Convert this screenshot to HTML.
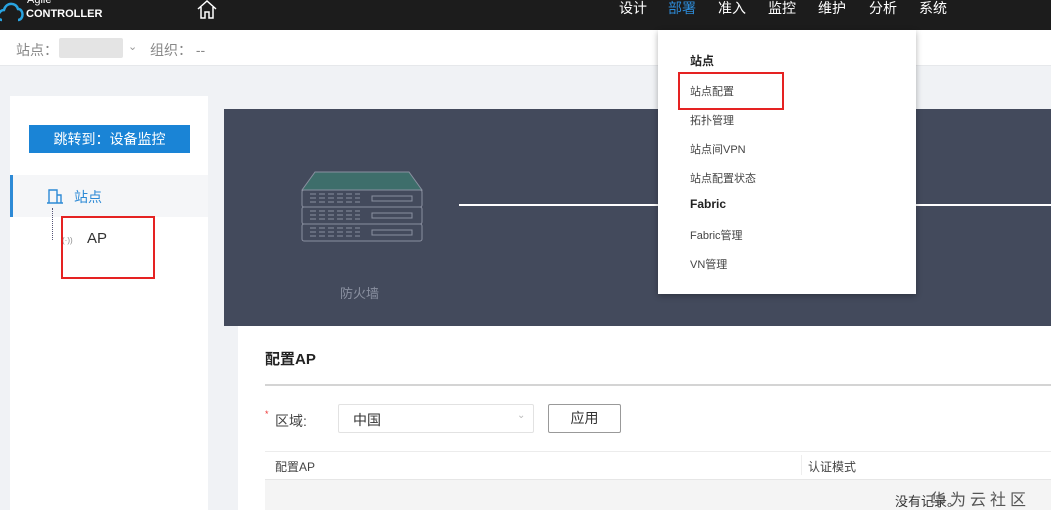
<!DOCTYPE html>
<html><head><meta charset="utf-8"><style>
*{margin:0;padding:0;box-sizing:border-box}
body{width:1051px;height:522px;overflow:hidden;background:#f0f2f5;font-family:"Liberation Sans","Noto Sans CJK SC",sans-serif;position:relative;color:#333}
.a{position:absolute}
.hdr{left:0;top:0;width:1051px;height:30px;background:#1c1c1c}
.nav{top:0;font-size:14px;color:#fff;line-height:16px}
.menu{left:658px;top:30px;width:258px;height:264px;background:#fff;box-shadow:0 2px 6px rgba(0,0,0,.3)}
.mi{position:absolute;left:32px;font-size:11px;color:#444}
</style></head><body>
<div class="a hdr"></div>
<svg class="a" style="left:0;top:0" width="24" height="22"><path d="M2 20 C-4 20 -2 10 4 10 C6 2 16 2 18 9 C24 9 24 20 18 20" fill="none" stroke="#29a3e0" stroke-width="2.5"/></svg>
<div class="a" style="left:27px;top:-6px;font-size:11px;color:#fff">Agile</div>
<div class="a" style="left:26px;top:8px;font-size:11px;font-weight:bold;color:#fff">CONTROLLER</div>
<svg class="a" style="left:196px;top:0" width="22" height="20"><path d="M2 9 L11 1 L20 9 M5 7 V18 H9 V12 H13 V18 H17 V7" fill="none" stroke="#fff" stroke-width="1.5"/></svg>
<div class="a nav" style="left:619px">设计</div>
<div class="a nav" style="left:668px;color:#2d8ad6">部署</div>
<div class="a nav" style="left:718px">准入</div>
<div class="a nav" style="left:768px">监控</div>
<div class="a nav" style="left:818px">维护</div>
<div class="a nav" style="left:869px">分析</div>
<div class="a nav" style="left:919px">系统</div>
<div class="a" style="left:0;top:30px;width:1051px;height:36px;background:#fff;border-bottom:1px solid #e6e8eb"></div>
<div class="a" style="left:16px;top:40px;font-size:14px;color:#888">站点：</div>
<div class="a" style="left:59px;top:38px;width:64px;height:20px;background:#e4e4e4;border-radius:2px"></div>
<div class="a" style="left:128px;top:40px;font-size:11px;color:#999">⌄</div>
<div class="a" style="left:150px;top:40px;font-size:14px;color:#888">组织：&nbsp;--</div>
<div class="a" style="left:10px;top:96px;width:198px;height:414px;background:#fff"></div>
<div class="a" style="left:29px;top:125px;width:161px;height:28px;background:#1a84d6;color:#fff;font-size:14px;text-align:center;line-height:28px">跳转到：设备监控</div>
<div class="a" style="left:10px;top:175px;width:198px;height:42px;background:#f5f6f8;border-left:3px solid #2d8ad6"></div>
<svg class="a" style="left:46px;top:187px" width="18" height="18"><path d="M3 16 V3 H11 V16 M11 8 H15 V16 M1 16 H17" fill="none" stroke="#2d8ad6" stroke-width="1.4"/></svg>
<div class="a" style="left:74px;top:187px;font-size:14px;color:#2d8ad6">站点</div>
<div class="a" style="left:52px;top:208px;height:32px;border-left:1px dotted #557"></div>
<div class="a" style="left:62px;top:236px;font-size:8px;color:#888">(·))</div>
<div class="a" style="left:87px;top:230px;font-size:15px;color:#333">AP</div>
<div class="a" style="left:61px;top:216px;width:94px;height:63px;border:2px solid #e52222"></div>
<div class="a" style="left:224px;top:109px;width:827px;height:217px;background:#434a5c"></div>
<svg class="a" style="left:300px;top:168px" width="124" height="76"><path d="M2 22 L15 4 H109 L122 22 Z" fill="#3e6e6b" stroke="#8a90a0"/><g fill="none" stroke="#8a90a0"><rect x="2" y="22" width="120" height="17" rx="2"/><rect x="2" y="39" width="120" height="17" rx="2"/><rect x="2" y="56" width="120" height="17" rx="2"/><rect x="72" y="28" width="40" height="5"/><rect x="72" y="45" width="40" height="5"/><rect x="72" y="62" width="40" height="5"/><path d="M10 26h50M10 30h50M10 34h50M10 43h50M10 47h50M10 51h50M10 60h50M10 64h50M10 68h50" stroke-dasharray="6 3"/></g></svg>
<div class="a" style="left:340px;top:283px;font-size:13px;color:#8a90a0">防火墙</div>
<div class="a" style="left:459px;top:204px;width:200px;height:2px;background:#fff"></div>
<div class="a" style="left:916px;top:204px;width:135px;height:2px;background:#fff"></div>
<div class="a" style="left:238px;top:326px;width:813px;height:184px;background:#fff"></div>
<div class="a" style="left:265px;top:348px;font-size:15px;font-weight:bold;color:#222">配置AP</div>
<div class="a" style="left:265px;top:384px;width:786px;height:2px;background:#d4d4d4"></div>
<div class="a" style="left:265px;top:409px;font-size:9px;color:#e33">*</div>
<div class="a" style="left:275px;top:411px;font-size:14px;color:#444">区域:</div>
<div class="a" style="left:338px;top:404px;width:196px;height:29px;border:1px solid #e2e2e2;border-radius:2px"></div>
<div class="a" style="left:353px;top:410px;font-size:14px;color:#333">中国</div>
<div class="a" style="left:517px;top:410px;font-size:10px;color:#bbb">⌄</div>
<div class="a" style="left:548px;top:404px;width:73px;height:29px;border:1px solid #999;border-radius:2px;font-size:14px;text-align:center;line-height:27px">应用</div>
<div class="a" style="left:265px;top:451px;width:786px;height:1px;background:#ececec"></div>
<div class="a" style="left:275px;top:458px;font-size:12px;color:#444">配置AP</div>
<div class="a" style="left:801px;top:455px;width:1px;height:20px;background:#eee"></div>
<div class="a" style="left:808px;top:458px;font-size:12px;color:#444">认证模式</div>
<div class="a" style="left:265px;top:479px;width:786px;height:31px;background:#f4f4f4;border-top:1px solid #e6e6e6"></div>
<div class="a" style="left:895px;top:491px;font-size:13px;color:#333">没有记录。</div>
<div class="a" style="left:930px;top:486px;font-size:16px;color:#555;letter-spacing:4px">华为云社区</div>
<div class="a" style="left:0;top:510px;width:1051px;height:12px;background:#fff"></div>
<div class="a menu">
<div class="mi" style="top:22px;font-size:12px;font-weight:bold;color:#222">站点</div>
<div class="mi" style="top:53px">站点配置</div>
<div class="mi" style="top:82px">拓扑管理</div>
<div class="mi" style="top:111px">站点间VPN</div>
<div class="mi" style="top:140px">站点配置状态</div>
<div class="mi" style="top:167px;font-size:12px;font-weight:bold;color:#222">Fabric</div>
<div class="mi" style="top:197px">Fabric管理</div>
<div class="mi" style="top:226px">VN管理</div>
<div class="a" style="left:20px;top:42px;width:106px;height:38px;border:2px solid #e52222"></div>
</div>
</body></html>
